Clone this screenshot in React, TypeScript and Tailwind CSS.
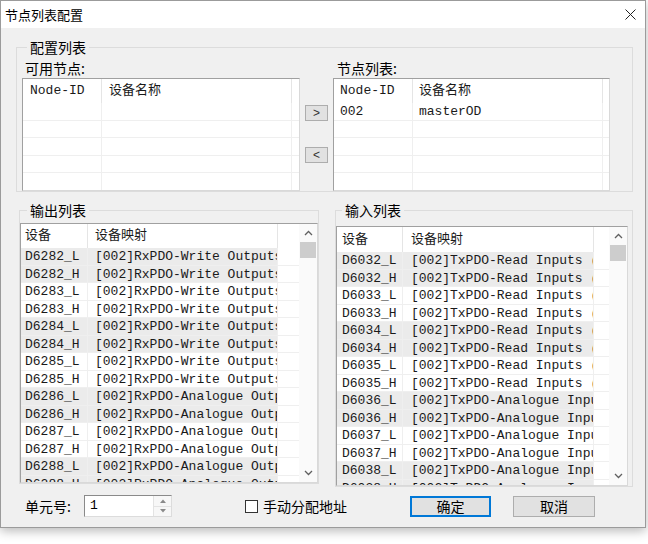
import React from 'react';

const ui = "font-['Noto_Sans_CJK_SC','Noto_Sans',sans-serif]";
const mono = "font-['Liberation_Mono','Noto_Sans_CJK_SC',monospace]";

type Row = [string, string];

const nodeRows: Row[] = [['002', 'masterOD']];

const outRows: Row[] = [
  ['D6282_L', '[002]RxPDO-Write Outputs (0x7000)'],
  ['D6282_H', '[002]RxPDO-Write Outputs (0x7000)'],
  ['D6283_L', '[002]RxPDO-Write Outputs (0x7000)'],
  ['D6283_H', '[002]RxPDO-Write Outputs (0x7000)'],
  ['D6284_L', '[002]RxPDO-Write Outputs (0x7000)'],
  ['D6284_H', '[002]RxPDO-Write Outputs (0x7000)'],
  ['D6285_L', '[002]RxPDO-Write Outputs (0x7000)'],
  ['D6285_H', '[002]RxPDO-Write Outputs (0x7000)'],
  ['D6286_L', '[002]RxPDO-Analogue Outputs'],
  ['D6286_H', '[002]RxPDO-Analogue Outputs'],
  ['D6287_L', '[002]RxPDO-Analogue Outputs'],
  ['D6287_H', '[002]RxPDO-Analogue Outputs'],
  ['D6288_L', '[002]RxPDO-Analogue Outputs'],
  ['D6288_H', '[002]RxPDO-Analogue Outputs'],
];

const inRows: Row[] = [
  ['D6032_L', '[002]TxPDO-Read Inputs (0x6000)'],
  ['D6032_H', '[002]TxPDO-Read Inputs (0x6000)'],
  ['D6033_L', '[002]TxPDO-Read Inputs (0x6000)'],
  ['D6033_H', '[002]TxPDO-Read Inputs (0x6000)'],
  ['D6034_L', '[002]TxPDO-Read Inputs (0x6000)'],
  ['D6034_H', '[002]TxPDO-Read Inputs (0x6000)'],
  ['D6035_L', '[002]TxPDO-Read Inputs (0x6000)'],
  ['D6035_H', '[002]TxPDO-Read Inputs (0x6000)'],
  ['D6036_L', '[002]TxPDO-Analogue Inputs'],
  ['D6036_H', '[002]TxPDO-Analogue Inputs'],
  ['D6037_L', '[002]TxPDO-Analogue Inputs'],
  ['D6037_H', '[002]TxPDO-Analogue Inputs'],
  ['D6038_L', '[002]TxPDO-Analogue Inputs'],
  ['D6038_H', '[002]TxPDO-Analogue Inputs'],
];

const Chevron = ({ up }: { up?: boolean }) => (
  <svg width="9" height="6" viewBox="0 0 9 6">
    <path
      d={up ? 'M1 5 L4.5 1.5 L8 5' : 'M1 1 L4.5 4.5 L8 1'}
      fill="none"
      stroke="#606060"
      strokeWidth="1.3"
    />
  </svg>
);

const ScrollBar = () => (
  <div className="w-[18px] shrink-0 flex flex-col bg-[#fafafa]">
    <div className="h-[18px] flex items-center justify-center">
      <Chevron up />
    </div>
    <div className="flex-1 px-[1px]">
      <div className="h-[16px] bg-[#cdcdcd]" />
    </div>
    <div className="h-[18px] flex items-center justify-center">
      <Chevron />
    </div>
  </div>
);

interface ListProps {
  c1: string;
  c2: string;
  head: Row;
  headCls: string;
  rows: Row[];
  fill: number;
  striped?: boolean;
  scroll?: boolean;
}

const ListView: React.FC<ListProps> = ({ c1, c2, head, headCls, rows, fill, striped, scroll }) => {
  const all: Row[] = [...rows];
  while (all.length < fill) all.push(['', '']);

  return (
    <div className="h-full flex bg-white border border-t-[#a0a0a0] border-l-[#a0a0a0] border-r-[#d9d9d9] border-b-[#d9d9d9] overflow-hidden">
      <div className={`flex-1 min-w-0 flex flex-col overflow-hidden ${mono} text-[13px] text-[#1a1a1a]`}>
        {/* header */}
        <div className={`flex shrink-0 ${headCls}`}>
          <div className={`${c1} shrink-0 flex items-center border-r border-[#e5e5e5] whitespace-nowrap`}>{head[0]}</div>
          <div className={`${c2} shrink-0 flex items-center border-r border-[#e5e5e5] whitespace-nowrap`}>{head[1]}</div>
          <div className="flex-1" />
        </div>
        {all.map((r, i) => {
          const gray = striped && r[0] !== '' && Math.floor(i / 2) % 2 === 0;
          return (
            <div key={i} className="flex shrink-0 h-[17.5px] overflow-hidden">
              <div
                className={`${c1} shrink-0 overflow-hidden whitespace-nowrap leading-[17px] border-r border-b border-[#efefef] ${
                  gray ? 'bg-[#ebebeb]' : 'bg-white'
                }`}
              >
                {r[0]}
              </div>
              <div
                className={`${c2} shrink-0 overflow-hidden whitespace-nowrap leading-[17px] border-r border-b border-[#efefef] ${
                  gray ? 'bg-[#ebebeb]' : 'bg-white'
                }`}
              >
                {r[1]}
              </div>
              <div className="flex-1 border-b border-[#efefef]" />
            </div>
          );
        })}
      </div>
      {scroll && <ScrollBar />}
    </div>
  );
};

const SmallButton = ({ label }: { label: string }) => (
  <div className="w-[23px] h-[16px] border border-[#adadad] bg-[#e1e1e1] flex items-center justify-center font-['Liberation_Sans',sans-serif] text-[12px] leading-none text-[#333]">
    {label}
  </div>
);

const App: React.FC = () => {
  return (
    <div className="w-[648px] h-[544px] bg-white overflow-hidden">
      <div className="w-[646px] h-[528px] border border-[#9b9b9b] bg-[#f0f0f0] shadow-[0_3px_10px_rgba(0,0,0,0.28)] flex flex-col">
        {/* title bar */}
        <div className="h-[27px] shrink-0 bg-white flex items-center justify-between pl-[4px] pr-[9px]">
          <span className={`${ui} text-[13px] leading-[26px] text-black`}>节点列表配置</span>
          <svg width="11" height="11" viewBox="0 0 11 11">
            <path d="M0.5 0.5 L10.5 10.5 M10.5 0.5 L0.5 10.5" stroke="#222" strokeWidth="1" />
          </svg>
        </div>

        {/* 配置列表 */}
        <fieldset className="ml-[15px] mt-[10px] w-[617px] border border-[#dcdcdc] pl-[5px] pb-0">
          <legend className={`ml-[5px] px-[3px] ${ui} text-[14px] leading-[18px] text-black`}>配置列表</legend>
          <div className="flex">
            <div className="w-[278px] flex flex-col">
              <div className={`pl-[3px] mt-[3px] h-[19px] ${ui} text-[14px] leading-[19px] text-black`}>可用节点:</div>
              <div className="h-[113px]">
                <ListView
                  c1="w-[79px] pl-[7px]"
                  c2="w-[190px] pl-[7px]"
                  head={['Node-ID', '设备名称']}
                  headCls="h-[24px]"
                  rows={[]}
                  fill={5}
                />
              </div>
            </div>
            <div className="w-[33px] flex flex-col items-center pt-[49px]">
              <SmallButton label=">" />
              <div className="mt-[26px]">
                <SmallButton label="<" />
              </div>
            </div>
            <div className="w-[277px] flex flex-col">
              <div className={`pl-[4px] mt-[3px] h-[19px] ${ui} text-[14px] leading-[19px] text-black`}>节点列表:</div>
              <div className="h-[113px]">
                <ListView
                  c1="w-[79px] pl-[6px]"
                  c2="w-[190px] pl-[6px]"
                  head={['Node-ID', '设备名称']}
                  headCls="h-[24px]"
                  rows={nodeRows}
                  fill={5}
                />
              </div>
            </div>
          </div>
        </fieldset>

        {/* 输出 / 输入 列表 */}
        <div className="flex items-start pl-[18px] mt-[9px]">
          <fieldset className="w-[300px] border border-[#dcdcdc] pb-0">
            <legend className={`ml-[7px] px-[3px] ${ui} text-[14px] leading-[18px] text-black`}>输出列表</legend>
            <div className="mt-[4px] h-[260px]">
              <ListView
                c1="w-[67px] pl-[4px]"
                c2="w-[190px] pl-[7px]"
                head={['设备', '设备映射']}
                headCls="h-[24px]"
                rows={outRows}
                fill={14}
                striped
                scroll
              />
            </div>
          </fieldset>
          <fieldset className="ml-[16px] w-[298px] border border-[#dcdcdc] pr-[4px] pb-0">
            <legend className={`ml-[6px] px-[3px] ${ui} text-[14px] leading-[18px] text-black`}>输入列表</legend>
            <div className="mt-[7px] h-[260px]">
              <ListView
                c1="w-[66px] pl-[5px]"
                c2="w-[191px] pl-[8px]"
                head={['设备', '设备映射']}
                headCls="h-[25px]"
                rows={inRows}
                fill={14}
                striped
                scroll
              />
            </div>
          </fieldset>
        </div>

        {/* bottom bar */}
        <div className="mt-[8px] pl-[24px] flex items-center h-[22px]">
          <span className={`w-[59px] ${ui} text-[14px] leading-[22px] text-black`}>单元号:</span>
          <div className="w-[88px] h-[22px] flex bg-white border border-t-[#8a8a8a] border-l-[#8a8a8a] border-r-[#dcdcdc] border-b-[#dcdcdc]">
            <div className={`flex-1 pl-[5px] ${mono} text-[13px] leading-[20px] text-black`}>1</div>
            <div className="w-[18px] flex flex-col border-l border-[#e3e3e3] bg-[#f7f7f7]">
              <div className="flex-1 flex items-center justify-center border-b border-[#e3e3e3]">
                <svg width="6" height="4" viewBox="0 0 6 4">
                  <path d="M0 4 L3 0.5 L6 4 Z" fill="#8a8a8a" />
                </svg>
              </div>
              <div className="flex-1 flex items-center justify-center">
                <svg width="6" height="4" viewBox="0 0 6 4">
                  <path d="M0 0 L3 3.5 L6 0 Z" fill="#8a8a8a" />
                </svg>
              </div>
            </div>
          </div>
          <div className="ml-[73px] w-[165px] flex items-center">
            <div className="w-[13px] h-[13px] border border-[#333] bg-white" />
            <span className={`ml-[5px] ${ui} text-[14px] leading-[22px] text-black`}>手动分配地址</span>
          </div>
          <button className={`w-[81px] h-[21px] border border-[#0078d7] shadow-[inset_0_0_0_1px_#0078d7] bg-[#e1e1e1] ${ui} text-[14px] leading-[19px] text-black`}>
            确定
          </button>
          <button className={`ml-[22px] w-[82px] h-[21px] border border-[#adadad] bg-[#e1e1e1] ${ui} text-[14px] leading-[19px] text-black`}>
            取消
          </button>
        </div>
      </div>
    </div>
  );
};

export default App;
